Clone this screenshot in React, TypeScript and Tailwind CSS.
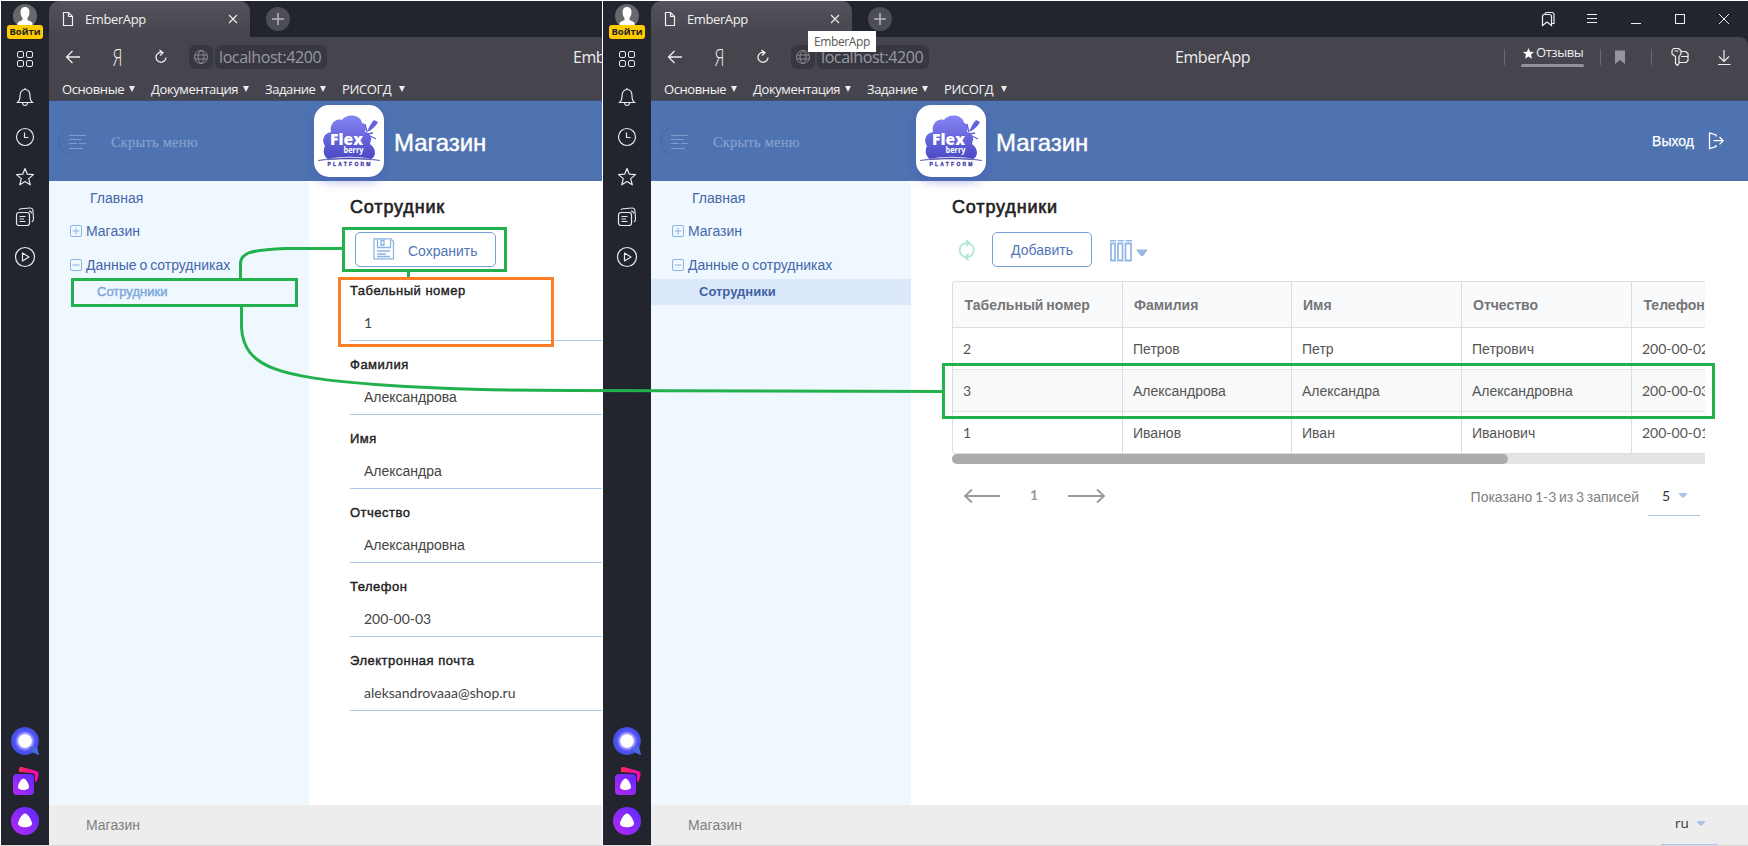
import React from "react";

const UI = "font-['Open_Sans',sans-serif]";
const BODY = "font-['Liberation_Sans',sans-serif]";

type IconProps = { w?: number; h?: number; className?: string; children: React.ReactNode };

function Icon({ w = 20, h = 20, className = "", children }: IconProps) {
  return (
    <svg width={w} height={h} viewBox={`0 0 ${w} ${h}`} fill="none" stroke="currentColor" className={`shrink-0 ${className}`}>
      {children}
    </svg>
  );
}

function Num({ children }: { children: React.ReactNode }) {
  return <span className="font-['Lato',sans-serif] text-[14px]">{children}</span>;
}

function Cell40({ children }: { children: React.ReactNode }) {
  return <div className="flex h-10 w-12 shrink-0 items-center justify-center">{children}</div>;
}

function Rail() {
  return (
    <aside className="flex w-12 shrink-0 flex-col bg-[#23252e] text-[#e9e9ea]">
      <div className="flex h-[38px] flex-col items-center pt-[3px]">
        <svg width="24" height="22" viewBox="0 0 24 22" className="shrink-0">
          <circle cx="12" cy="12" r="12" fill="#67686b" />
          <path d="M12 3c3 0 4.500 2 4.500 5 0 2.500-.8 4.500-2 6v2c2 1 4 1.500 5 3v3h-15v-3c1-1.500 3-2 5-3v-2c-1.200-1.500-2-3.500-2-6 0-3 1.500-5 4.500-5z" fill="#fff" />
        </svg>
        <div className={`${UI} -mt-px h-[14px] w-9 shrink-0 rounded-[3px] bg-[#fc0] text-center text-[9.500px] leading-[14px] font-bold text-[#222]`}>Войти</div>
      </div>
      <div className="flex h-[38px] w-12 shrink-0 items-center justify-center pt-0.5">
        <Icon w={18} h={18}>
          <rect x="1.500" y="1.500" width="6" height="6" rx="1.500" />
          <rect x="10.500" y="1.500" width="6" height="6" rx="1.500" />
          <rect x="1.500" y="10.500" width="6" height="6" rx="1.500" />
          <rect x="10.500" y="10.500" width="6" height="6" rx="1.500" />
        </Icon>
      </div>
      <Cell40>
        <Icon w={18} h={20}>
          <path d="M9 1v1.500M1.500 15.500c2-1.500 2.500-3 2.500-6.500C4 5 6 2.500 9 2.500S14 5 14 9c0 3.500.5 5 2.500 6.500zM6.500 16c.3 2 1.200 2.500 2.500 2.500s2.200-.5 2.500-2.500" strokeWidth="1.200" />
        </Icon>
      </Cell40>
      <Cell40>
        <Icon w={20} h={20}>
          <circle cx="10" cy="10" r="8.500" strokeWidth="1.200" />
          <path d="M9.500 5.500v5h4" strokeWidth="1.200" />
        </Icon>
      </Cell40>
      <Cell40>
        <Icon w={20} h={20}>
          <path d="M10 1.500l2.300 5.700 6.200.4-4.800 4 1.600 6.200L10 14.500l-5.300 3.300 1.600-6.200-4.800-4 6.200-.4z" strokeWidth="1.200" strokeLinejoin="round" />
        </Icon>
      </Cell40>
      <Cell40>
        <Icon w={20} h={20}>
          <rect x="1.500" y="5.500" width="13" height="13" rx="2.500" strokeWidth="1.200" />
          <path d="M4 3c.4-1 1-1.200 2-1.300l9-.7c2-.2 2.700.6 2.900 2l.6 9c.1 1.800-.8 2.500-1.800 3M14 4q2.500.3 2.700 2.500" strokeWidth="1.100" />
          <path d="M4.500 9.500h6M4.500 12h4.500M4.500 14.500h6" strokeWidth="1.100" />
        </Icon>
      </Cell40>
      <Cell40>
        <Icon w={22} h={22}>
          <circle cx="11" cy="11" r="9.500" strokeWidth="1.200" />
          <path d="M8.500 7v8l6.500-4z" strokeWidth="1.200" strokeLinejoin="round" />
        </Icon>
      </Cell40>
      <div className="flex-1" />
      <Cell40>
        <svg width="28" height="28" viewBox="0 0 28 28">
          <defs>
            <radialGradient id="glow">
              <stop offset=".42" stopColor="#fff" />
              <stop offset=".52" stopColor="#a9a4ff" />
              <stop offset=".72" stopColor="#5551f5" />
              <stop offset="1" stopColor="#3d4fe0" />
            </radialGradient>
            <linearGradient id="violet" x1="1" y1="0" x2="0" y2="1">
              <stop stopColor="#5a2bff" />
              <stop offset="1" stopColor="#b828f4" />
            </linearGradient>
            <linearGradient id="pink">
              <stop stopColor="#ff2a50" />
              <stop offset="1" stopColor="#ff00c8" />
            </linearGradient>
          </defs>
          <path d="M14 0a14 14 0 0 1 12 21l2 7-6-2.500A14 14 0 1 1 14 0z" fill="url(#glow)" />
          <path d="M18 20l8 0 2 8-6-2.500z" fill="#4769dd" />
          <circle cx="14" cy="14" r="6.500" fill="#fff" />
        </svg>
      </Cell40>
      <Cell40>
        <svg width="28" height="28" viewBox="0 0 28 28">
          <path d="M8 5V2c0-1.500 1-2 3-2l14 4c2 .6 3 2 2.500 4L26 14l-2 1V9c0-2-1-3-3-3z" fill="url(#pink)" />
          <rect x="2" y="7" width="21" height="21" rx="4" fill="url(#violet)" />
          <path d="M12.500 11.500c2.500 0 5.500 6 5.500 8.500 0 4-11 4-11 0 0-2.500 3-8.500 5.500-8.500z" fill="#fff" />
        </svg>
      </Cell40>
      <Cell40>
        <svg width="28" height="28" viewBox="0 0 28 28">
          <circle cx="14" cy="14" r="14" fill="url(#violet)" />
          <path d="M14 6.500c3 0 7 7.500 7 10 0 5-14 5-14 0 0-2.500 4-10 7-10z" fill="#fff" />
        </svg>
      </Cell40>
      <div className="h-1 shrink-0" />
    </aside>
  );
}

function TabStrip({ controls }: { controls?: boolean }) {
  return (
    <div className="flex h-9 shrink-0 bg-[#23252e] text-[#f0f0f0]">
      <div className="flex h-9 w-[201px] shrink-0 items-center rounded-t-[10px] bg-gradient-to-b from-[#54535b] to-[#46454d] pl-[13px]">
        <Icon w={12} h={16}>
          <path d="M1.500 1.500h5l4 4v9h-9zM6.500 1.500v4h4" strokeWidth="1.200" />
        </Icon>
        <span className={`${UI} ml-[11px] w-[135px] pt-px text-[13px] tracking-[-0.4px]`}>EmberApp</span>
        <Icon w={12} h={12} className="ml-[7px]">
          <path d="M2 2l8 8M10 2l-8 8" strokeWidth="1.100" />
        </Icon>
      </div>
      <div className="mt-1.5 ml-[16px] flex size-6 shrink-0 items-center justify-center rounded-full bg-[#4c4d55] text-[#b5b5b9]">
        <Icon w={14} h={14}>
          <path d="M7 1v12M1 7h12" strokeWidth="1.500" />
        </Icon>
      </div>
      {controls && (
        <div className="ml-auto flex items-center pr-[18px]">
          <Icon w={16} h={18} className="mr-[30px]">
            <path d="M2.500 15.500v-9q0-2 2-2h5q2 0 2 2v9l-4.500-3.500zM5 4.500q0-2 2-2h5q2 0 2 2v9h-2.500" strokeWidth="1.200" />
          </Icon>
          <Icon w={12} h={12} className="mr-[32px]">
            <path d="M1 1.500h10M1 5.500h10M1 9.500h10" />
          </Icon>
          <Icon w={12} h={12} className="mr-[32px]">
            <path d="M1 10.500h10" />
          </Icon>
          <Icon w={12} h={12} className="mr-[32px]">
            <rect x="1.500" y="1.500" width="9" height="9" />
          </Icon>
          <Icon w={12} h={12}>
            <path d="M1 1l10 10M11 1l-10 10" />
          </Icon>
        </div>
      )}
    </div>
  );
}

function AddressBar({ controls }: { controls?: boolean }) {
  return (
    <div className="shrink-0 bg-[#23252e]">
      <div className={`${UI} flex h-10 items-center bg-[#46454d] pl-4 text-[#eee] ${controls ? "rounded-tr-[8px]" : ""}`}>
        <Icon w={16} h={16}>
          <path d="M1.500 8h13.500M7.500 2l-6 6 6 6" strokeWidth="1.300" />
        </Icon>
        <span className="ml-[30px] w-[12px] shrink-0 scale-x-[0.7] text-[23px] leading-10 font-light">Я</span>
        <Icon w={14} h={16} className="ml-[31px]">
          <path d="M8.500 3.500a5 5 0 1 0 3.500 5M5.500 1l3.500 2.700-3 2.800" strokeWidth="1.300" />
        </Icon>
        <div className="ml-[21px] flex size-6 shrink-0 items-center justify-center rounded-[6px] bg-[#373842] text-[#8b8b91]">
          <Icon w={16} h={16}>
            <circle cx="8" cy="8" r="6.500" />
            <path d="M8 1.500c-4 3-4 10 0 13M8 1.500c4 3 4 10 0 13M2 6h12M2 10h12" />
          </Icon>
        </div>
        <div className="ml-0.5 flex h-6 w-28 shrink-0 items-center rounded-[6px] bg-[#373842] pl-1 text-[16px] tracking-[-0.4px] text-[#99989e]">
          localhost:4200
        </div>
        <span className="ml-[246px] w-[76px] shrink-0 text-[16px] tracking-[-0.45px]">EmberApp</span>
        {controls && (
          <div className="ml-auto flex h-10 items-center pr-[16px]">
            <div className="h-4 w-px bg-[#6b6a72]" />
            <div className="-mt-[5px] ml-4 flex w-[63px] flex-col">
              <div className="flex h-[21px] items-center pl-[2px] text-[13px] tracking-[-0.45px]">
                <svg width="11" height="11" viewBox="0 0 11 11" fill="#fff" className="mr-[2px] shrink-0">
                  <path d="M5.500 0l1.500 3.700 4 .3-3 2.600 1 4.100-3.500-2.200L2 10.700l1-4.100L0 4l4-.3z" />
                </svg>
                Отзывы
              </div>
              <div className="h-[3px] rounded-full bg-[#929197]" />
            </div>
            <div className="ml-4 h-4 w-px bg-[#6b6a72]" />
            <svg width="10" height="14" viewBox="0 0 10 14" className="ml-[14px]">
              <path d="M0 .5h10V14l-5-4-5 4z" fill="#96959b" />
            </svg>
            <div className="ml-[26px] h-4 w-px bg-[#6b6a72]" />
            <Icon w={20} h={20} className="ml-[18px]">
              <path d="M3.500 1.500h5l2.500 2v3.500L9 9.500v7l-1.500 2-2-2v-7L2 7V3.500zM4.500 4h4M11.500 4.500h4l2.500 2v7l-2 2H9.500M11 9.500h7" strokeWidth="1.200" strokeLinejoin="round" />
            </Icon>
            <Icon w={16} h={18} className="ml-[26px]">
              <path d="M8 2v11M3 8.500l5 5 5-5M2 16.500h12.500" strokeWidth="1.200" />
            </Icon>
          </div>
        )}
      </div>
    </div>
  );
}

function Bookmark({ label, width }: { label: string; width: string }) {
  return (
    <div className={`flex shrink-0 items-center ${width}`}>
      <span className="flex-1">{label}</span>
      <svg width="6" height="6" viewBox="0 0 6 6" className="mr-px mb-px">
        <path d="M0 0h6L3 6z" fill="#eee" />
      </svg>
    </div>
  );
}

function Bookmarks() {
  return (
    <div className={`${UI} flex h-6 shrink-0 items-center gap-[15px] border-b border-[#3c4d74] bg-[#46454d] pt-[2px] pl-[13px] text-[13px] tracking-[-0.4px] text-[#f2f2f2]`}>
      <Bookmark label="Основные" width="w-[74px]" />
      <Bookmark label="Документация" width="w-[99px]" />
      <Bookmark label="Задание" width="w-[62px]" />
      <Bookmark label="РИСОГД" width="w-[64px]" />
    </div>
  );
}

function Logo() {
  return (
    <div className="flex h-[72px] w-[70px] shrink-0 items-center justify-center rounded-[15px] bg-white shadow-[0_5px_10px_rgba(60,80,190,0.35)]">
      <svg width="70" height="72" viewBox="0 0 70 72">
        <defs>
          <linearGradient id="berry" x1="0" y1="0" x2="0" y2="1">
            <stop stopColor="#8784f4" />
            <stop offset="1" stopColor="#4a48c4" />
          </linearGradient>
        </defs>
        <path d="M14 54c-5-3-5-9-3-13-4-6-1-13 6-14-2-8 5-14 11-12 4-7 19-6 20 3 5 1 4 6 3 9 6 1 7 6 5 12 7 5 6 13 1 15-12-3-31-3-43 0z" fill="url(#berry)" />
        <path d="M53 27c2-5 4-9 7-12l4 2c-2 4-6 8-11 10z" fill="#6462dc" />
        <path d="M53 27l-2-8M54 30l8 4M53 29l6-1M54 30l3 5" stroke="#6462dc" strokeWidth="1.300" />
        <path d="M4 55.500c18-3.500 44-3.500 62 0-18-2-44-2-62 0z" fill="#4240a8" stroke="#4240a8" strokeWidth=".5" />
        <text x="16" y="40" fontFamily="Open Sans" fontWeight="800" fontSize="15" textLength="33" lengthAdjust="spacingAndGlyphs" fill="#fff">Flex</text>
        <text x="29.500" y="47.500" fontFamily="Open Sans" fontWeight="700" fontSize="8" textLength="20" lengthAdjust="spacingAndGlyphs" fill="#fff">berry</text>
        <text x="13.500" y="61" fontFamily="Liberation Sans" fontWeight="700" fontSize="5" textLength="43" fill="#4240a8" stroke="#4240a8" strokeWidth=".3">PLATFORM</text>
      </svg>
    </div>
  );
}

function AppHeader({ logout }: { logout?: boolean }) {
  return (
    <header className="relative z-10 flex h-20 shrink-0 items-center bg-[#4f72b1]">
      <Icon w={34} h={34} className="ml-[7px] text-[#7f9bcb]">
        <path d="M14 2.500a15 15 0 0 0 0 29" stroke="#466aa9" />
        <path d="M13 11.500h17M13 15.500h13M13 19.500h8M23 19.500h7M13 24.500h14" />
      </Icon>
      <span className="ml-[21px] w-[203px] shrink-0 pt-[3px] font-['Liberation_Serif',serif] text-[14.5px] tracking-[0.2px] text-[#86a1cf] [-webkit-text-stroke:0.2px_#86a1cf]">Скрыть меню</span>
      <Logo />
      <span className={`${BODY} ml-[10px] pt-1 text-[24px] tracking-[-0.05px] text-white [-webkit-text-stroke:0.4px_white]`}>Магазин</span>
      {logout && (
        <div className={`${BODY} ml-auto flex items-center pr-[23px] text-[14px] text-white`}>
          <span className="[-webkit-text-stroke:0.25px_white]">Выход</span>
          <Icon w={18} h={20} className="ml-[13px]">
            <path d="M9 5.500V4L2.500 2v15.500l6.500-2V14" strokeWidth="1.300" />
            <path d="M6.500 9.700h9.500M12.500 6l3.700 3.700-3.700 3.700" strokeWidth="1.300" />
          </Icon>
        </div>
      )}
    </header>
  );
}

function Expander({ open }: { open?: boolean }) {
  return (
    <Icon w={12} h={12} className="mr-[4px] -mt-px text-[#8db3e2]">
      <rect x=".5" y=".5" width="11" height="11" rx="1.500" />
      <path d={open ? "M2.500 6h7" : "M2.500 6h7M6 2.500v7"} />
    </Icon>
  );
}

function SideNav({ active }: { active?: boolean }) {
  return (
    <nav className={`${BODY} w-[260px] shrink-0 rounded-tr-[5px] bg-[#eff7ff] text-[14px] text-[#4467a9]`}>
      <div className="flex h-[34px] items-center pl-[41px]">Главная</div>
      <div className="flex h-[33px] items-center pl-[21px]">
        <Expander />
        Магазин
      </div>
      <div className="flex h-[31px] items-center pt-[3px] pl-[21px] [word-spacing:-1px]">
        <Expander open />
        Данные о сотрудниках
      </div>
      {active ? (
        <div className="flex h-[26px] items-center bg-[#dbe9fa] pl-12 text-[13px] font-bold tracking-[0px] text-[#3f62a6]">Сотрудники</div>
      ) : (
        <div className="flex h-[26px] items-center pl-12 text-[13px] tracking-[0px] text-[#7ba6da] [-webkit-text-stroke:0.4px_#7ba6da]">Сотрудники</div>
      )}
    </nav>
  );
}

function Field({ label, value, latin }: { label: string; value: string; latin?: boolean }) {
  return (
    <div className="h-[74px] shrink-0">
      <div className="h-[60px] border-b border-[#aac7ea]">
        <div className="h-5 text-[13px] leading-5 tracking-[0.5px] text-[#222] [-webkit-text-stroke:0.4px_#222]">{label}</div>
        <div className="mt-3 pl-[14px] text-[14px] leading-5 text-[#444]">{latin ? <Num>{value}</Num> : value}</div>
      </div>
    </div>
  );
}

function PageTitle({ children }: { children: React.ReactNode }) {
  return <h1 className="mt-[15px] h-[22px] text-[18px] leading-[22px] tracking-[0.85px] text-[#222] [-webkit-text-stroke:0.6px_#222]">{children}</h1>;
}

function EmployeeForm() {
  return (
    <main className={`${BODY} flex min-w-0 flex-1 flex-col bg-white pl-[41px]`}>
      <PageTitle>Сотрудник</PageTitle>
      <button className="mt-[14px] ml-[5px] flex h-[35px] w-[141px] shrink-0 items-center rounded-[5px] border border-[#75a0d8] pl-[17px] text-[14px] text-[#5276b5]">
        <Icon w={22} h={22} className="-mt-[2px] mr-[13px] text-[#8db3e2]">
          <path d="M1 .8h17l2.500 3v17H1zM4.500 .8v8.700h13V2M8 2.500h3v4.500H8zM4 13h13M4 16h9M4 18.500h13" strokeWidth="1.300" />
        </Icon>
        <span className="pt-1">Сохранить</span>
      </button>
      <div className="mt-[14px]">
        <Field label="Табельный номер" value="1" latin />
        <Field label="Фамилия" value="Александрова" />
        <Field label="Имя" value="Александра" />
        <Field label="Отчество" value="Александровна" />
        <Field label="Телефон" value="200-00-03" latin />
        <Field label="Электронная почта" value="aleksandrovaaa@shop.ru" latin />
      </div>
    </main>
  );
}

const HEADERS = ["Табельный номер", "Фамилия", "Имя", "Отчество", "Телефон"];
const ROWS = [
  ["2", "Петров", "Петр", "Петрович", "200-00-02"],
  ["3", "Александрова", "Александра", "Александровна", "200-00-03"],
  ["1", "Иванов", "Иван", "Иванович", "200-00-01"],
];
const COLS = "grid w-[848px] grid-cols-[170px_169px_170px_170px_169px]";

function EmployeeTable() {
  return (
    <div className="w-[753px]">
      <div className="h-[173px] overflow-hidden rounded-l-[4px] border-y border-l border-[#ddd]">
        <div className={`${COLS} h-[46px] border-b border-[#ddd] bg-[#f9fafc] text-[14px] font-bold text-[#757575] [word-spacing:-1px]`}>
          {HEADERS.map((h, i) => (
            <div key={h} className={`flex items-center border-r border-[#ddd] pt-px whitespace-nowrap ${i === 0 || i === 4 ? "pl-[11.500px]" : "pl-[11px]"}`}>{h}</div>
          ))}
        </div>
        {ROWS.map((row, i) => (
          <div key={row[0]} className={`${COLS} h-[42px] border-b border-[#e3e3e3] text-[14px] text-[#555] ${i === 1 ? "bg-[#f9f9f9]" : "bg-white"}`}>
            {row.map((cell, j) => (
              <div key={cell} className={`flex items-center border-r border-[#ddd] pl-2.5 whitespace-nowrap ${j === 0 || j === 4 ? "" : "pt-px"}`}>
                {j === 0 || j === 4 ? <Num>{cell}</Num> : cell}
              </div>
            ))}
          </div>
        ))}
      </div>
      <div className="h-[10px] rounded-l-[5px] bg-[#e4e4e4]">
        <div className="h-[10px] w-[556px] rounded-[5px] bg-[#ababab]" />
      </div>
    </div>
  );
}

function Caret() {
  return (
    <svg width="8" height="5" viewBox="0 0 8 5" className="shrink-0">
      <path d="M0 0h8v1L5 4.500H3L0 1z" fill="#a6c5e8" />
    </svg>
  );
}

function EmployeeList() {
  return (
    <main className={`${BODY} flex min-w-0 flex-1 flex-col bg-white pl-[41px]`}>
      <PageTitle>Сотрудники</PageTitle>
      <div className="mt-[14px] flex h-[35px] shrink-0 items-center">
        <Icon w={18} h={22} className="ml-[6px] text-[#b0e6d3]">
          <path d="M6.500 18a7.300 7.300 0 0 1-1-13.200Q7.500 3.500 11 4M11.500 4.500a7.300 7.300 0 0 1 1 12.700Q10.500 18.500 7 18" strokeWidth="1.800" />
          <path d="M8 .8l3.200 3.200L8 7M10.500 15L7.300 18.200l3.200 3" strokeWidth="1.800" />
        </Icon>
        <button className="ml-4 flex h-[35px] w-[100px] items-center justify-center rounded-[5px] border border-[#75a0d8] pt-0.5 text-[14px] text-[#5276b5]">Добавить</button>
        <Icon w={22} h={22} className="mt-[3px] ml-[18px] text-[#94b9e5]">
          <path d="M0 .8h6.500M8 .8h6M15.500 .8h6.500" strokeWidth="1.600" />
          <path d="M1 3.500h4v17H1zM8 3.500h4.500v17H8zM15.500 3.500h5.500v17h-5.500z" strokeWidth="1.800" />
        </Icon>
        <svg width="12" height="8" viewBox="0 0 12 8" className="mt-1.5 ml-1">
          <path d="M0 .5h12L7 7H5z" fill="#94b9e5" />
        </svg>
      </div>
      <div className="mt-[14px]">
        <EmployeeTable />
      </div>
      <div className="mt-[16px] flex h-[30px] w-[753px] shrink-0 items-center text-[#999]">
        <Icon w={38} h={16} className="mt-px ml-[11px]">
          <path d="M2 8h35M9 1.500L2 8l7 6.500" strokeWidth="1.800" />
        </Icon>
        <span className="mx-[29px] -mt-px w-[9px] font-['Lato',sans-serif] text-[14px] font-bold text-[#999]">1</span>
        <Icon w={38} h={16} className="mt-px">
          <path d="M0 8h35M29 1.500L36 8l-7 6.500" strokeWidth="1.800" />
        </Icon>
        <span className="ml-auto pt-[3px] text-[14px] whitespace-nowrap text-[#808080] [word-spacing:-1.2px]">
          Показано <Num>1-3</Num> из <Num>3</Num> записей
        </span>
        <div className="mt-[4px] mr-[5px] ml-[9px] flex h-[38px] w-[52px] items-center border-b border-[#aac7ea] pb-0.5 pl-[14px] text-[#333]">
          <span className="w-[17px] font-['Lato',sans-serif] text-[14px]">5</span>
          <Caret />
        </div>
      </div>
    </main>
  );
}

function AppFooter({ lang }: { lang?: boolean }) {
  return (
    <footer className={`${BODY} flex h-10 shrink-0 justify-between bg-[#ededed] pr-[30px] pl-[37px] text-[14px] text-[#808080]`}>
      <span className="leading-10">Магазин</span>
      {lang && (
        <div className="flex h-10 w-[57px] items-center border-b border-[#a9c8f0] pb-[3px] pl-[14px] font-['Open_Sans',sans-serif] text-[#333]">
          <span className="w-[22px] text-[13.5px]">ru</span>
          <Caret />
        </div>
      )}
    </footer>
  );
}

function BrowserWindow({ full, children }: { full?: boolean; children: React.ReactNode }) {
  return (
    <section className={`flex h-[844px] shrink-0 overflow-hidden ${full ? "w-[1145px]" : "w-[601px]"}`}>
      <Rail />
      <div className="flex min-w-0 flex-1 flex-col overflow-hidden">
        <TabStrip controls={full} />
        <AddressBar controls={full} />
        <Bookmarks />
        <AppHeader logout={full} />
        <div className="flex min-h-0 flex-1">
          <SideNav active={full} />
          {children}
        </div>
        <AppFooter lang={full} />
      </div>
    </section>
  );
}

function Annotations() {
  return (
    <svg width="1748" height="846" viewBox="0 0 1748 846" fill="none" strokeWidth="3" stroke="#22b14c" className="pointer-events-none absolute top-0 left-0 z-30">
      <rect x="72.500" y="279.500" width="224" height="26" />
      <rect x="343.500" y="228.500" width="162" height="42" />
      <rect x="943.500" y="364.500" width="770" height="53" />
      <path d="M408.500 272v5" />
      <path d="M240.500 279v-15c0-11 9-14 45-15.500h58" />
      <path d="M241.500 306v22C244 368 280 377 375 384.500C430 388.500 500 390.500 570 390.500L943 391.500" />
      <rect x="339.500" y="278.500" width="213" height="67" stroke="#ff7f27" />
    </svg>
  );
}

export default function App() {
  return (
    <div className="relative flex h-[846px] w-[1748px] gap-px overflow-hidden bg-white pt-px pl-px">
      <BrowserWindow>
        <EmployeeForm />
      </BrowserWindow>
      <BrowserWindow full>
        <EmployeeList />
      </BrowserWindow>
      <div className="absolute bottom-0 left-0 h-px w-full bg-[#dcdcde]" />
      <div className={`${UI} absolute top-[31px] left-[808px] z-20 flex h-[21px] w-[68px] items-center bg-white pl-[6px] text-[12px] tracking-[-0.4px] text-[#575757]`}>
        EmberApp
      </div>
      <Annotations />
    </div>
  );
}
